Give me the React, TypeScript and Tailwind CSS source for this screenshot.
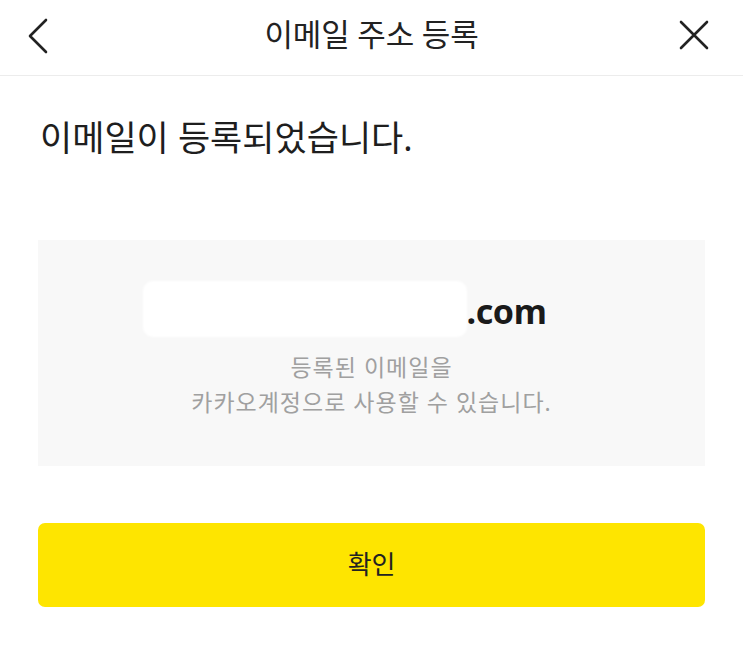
import React from "react";

const font = { fontFamily: '"Noto Sans", "Noto Sans CJK KR", sans-serif' };

export default function App() {
  return (
    <div className="w-[743px] h-[671px] bg-white text-[#1e1e1e]" style={font}>
      {/* Header */}
      <header className="relative h-[76px] flex items-center justify-center border-b border-[#ececec]">
        <button className="absolute left-[24px] top-[16px] w-[28px] h-[40px] flex items-center justify-center">
          <svg width="22" height="36" viewBox="0 0 22 36" fill="none">
            <path d="M19 2 L3 18 L19 34" stroke="#222" strokeWidth="2.6" strokeLinecap="round" strokeLinejoin="round" />
          </svg>
        </button>
        <h1 className="text-[31px] font-normal tracking-[-0.2px] leading-none -mt-[6px] text-[#222]">이메일 주소 등록</h1>
        <button className="absolute right-[32px] top-[18px] w-[34px] h-[34px] flex items-center justify-center">
          <svg width="30" height="30" viewBox="0 0 30 30" fill="none">
            <path d="M2 2 L28 28 M28 2 L2 28" stroke="#222" strokeWidth="2.6" strokeLinecap="round" />
          </svg>
        </button>
      </header>

      <main className="px-[38px]">
        <h2 className="pt-[38px] pl-[2px] text-[35px] font-normal leading-[48px]">
          이메일이 등록되었습니다.
        </h2>

        {/* Registered email box */}
        <section className="mt-[78px] h-[226px] bg-[#f8f8f8] flex flex-col items-center pt-[40px]">
          <div className="flex items-center h-[58px] mr-[54px]">
            <div className="w-[324px] h-[56px] bg-white rounded-[10px] blur-[1px]" />
            <span className="text-[34px] font-bold leading-none tracking-[-0.4px] text-[#1a1a1a] mt-[4px]">.com</span>
          </div>
          <p className="mt-[12px] text-[23px] text-[#a0a0a0] leading-[35px] text-center tracking-[1px]">
            등록된 이메일을
            <br />
            카카오계정으로 사용할 수 있습니다.
          </p>
        </section>

        <button className="mt-[57px] w-full h-[84px] bg-[#fee500] rounded-[7px] flex items-center justify-center">
          <span className="text-[26px] text-[#222] tracking-[-0.2px] -mt-[1px]">확인</span>
        </button>
      </main>
    </div>
  );
}
